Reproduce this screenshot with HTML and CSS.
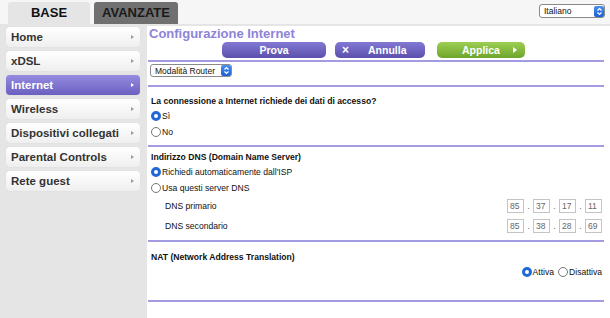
FILE: index.html
```html
<!DOCTYPE html>
<html lang="it">
<head>
  <meta charset="UTF-8">
  <title>Configurazione Internet</title>
  <link rel="stylesheet" href="styles.css">
</head>
<body>
  <div class="top">
    <div class="tabs">
      <div class="tab tab-base">BASE</div>
      <div class="tab tab-adv">AVANZATE</div>
    </div>
    <div class="select lang">
      <span class="select-text">Italiano</span>
      <span class="select-arrow">
        <svg width="7" height="9" viewBox="0 0 7 9"><path d="M1.5 3.5 L3.5 1.5 L5.5 3.5 M1.5 5.5 L3.5 7.5 L5.5 5.5" fill="none" stroke="#fff" stroke-width="1.2"/></svg>
      </span>
    </div>
  </div>

  <div class="layout">
    <nav class="sidebar">
      <div class="menu-item">Home<span class="arrow"></span></div>
      <div class="menu-item">xDSL<span class="arrow"></span></div>
      <div class="menu-item active">Internet<span class="arrow"></span></div>
      <div class="menu-item">Wireless<span class="arrow"></span></div>
      <div class="menu-item">Dispositivi collegati<span class="arrow"></span></div>
      <div class="menu-item">Parental Controls<span class="arrow"></span></div>
      <div class="menu-item">Rete guest<span class="arrow"></span></div>
    </nav>

    <main class="content">
      <h1 class="page-title">Configurazione Internet</h1>

      <div class="actions">
        <button class="btn btn-purple btn-prova">Prova</button>
        <button class="btn btn-purple btn-annulla"><span class="btn-x">×</span>Annulla</button>
        <button class="btn btn-green btn-applica">Applica<span class="btn-play"></span></button>
      </div>
      <div class="rule"></div>

      <div class="select mode">
        <span class="select-text">Modalità Router</span>
        <span class="select-arrow">
          <svg width="7" height="9" viewBox="0 0 7 9"><path d="M1.5 3.5 L3.5 1.5 L5.5 3.5 M1.5 5.5 L3.5 7.5 L5.5 5.5" fill="none" stroke="#fff" stroke-width="1.2"/></svg>
        </span>
      </div>
      <div class="rule rule-mode"></div>

      <section class="block block-login">
        <div class="block-title">La connessione a Internet richiede dei dati di accesso?</div>
        <div class="radio-row"><span class="radio on"></span>Sì</div>
        <div class="radio-row"><span class="radio"></span>No</div>
      </section>
      <div class="rule rule-login"></div>

      <section class="block block-dns">
        <div class="block-title">Indirizzo DNS (Domain Name Server)</div>
        <div class="radio-row"><span class="radio on"></span>Richiedi automaticamente dall'ISP</div>
        <div class="radio-row"><span class="radio"></span>Usa questi server DNS</div>
        <div class="ip-row">
          <span class="ip-label">DNS primario</span>
          <span class="ip">
            <span class="ip-box">85</span><span class="ip-dot">.</span><span class="ip-box">37</span><span class="ip-dot">.</span><span class="ip-box">17</span><span class="ip-dot">.</span><span class="ip-box">11</span>
          </span>
        </div>
        <div class="ip-row">
          <span class="ip-label">DNS secondario</span>
          <span class="ip">
            <span class="ip-box">85</span><span class="ip-dot">.</span><span class="ip-box">38</span><span class="ip-dot">.</span><span class="ip-box">28</span><span class="ip-dot">.</span><span class="ip-box">69</span>
          </span>
        </div>
      </section>
      <div class="rule rule-dns"></div>

      <section class="block block-nat">
        <div class="block-title">NAT (Network Address Translation)</div>
        <div class="radio-row nat-choice">
          <span class="radio on"></span>Attiva
          <span class="radio radio-gap"></span>Disattiva
        </div>
      </section>
      <div class="rule rule-nat"></div>
    </main>
  </div>
</body>
</html>
```

FILE: styles.css
```css
body { margin: 0; background: #e5e5e5; font-family: "Liberation Sans", Arial, sans-serif; color: #111; }

.top { height: 24px; background: #f6f6f6; display: flex; justify-content: space-between; }
.tabs { display: flex; align-items: flex-end; padding-left: 8px; gap: 4px; }
.tab { height: 22px; line-height: 22px; text-align: center; font-weight: bold; font-size: 13px; border-radius: 3px 3px 0 0; }
.tab-base { width: 82px; background: #e5e5e5; }
.tab-adv { width: 84px; background: #707070; color: #1a1a1a; }

.select { display: flex; align-items: center; justify-content: space-between; height: 13px; border: 1px solid #8a8a8a; border-radius: 3px; background: #fff; box-sizing: border-box; padding-left: 4px; font-size: 8.5px; }
.select-arrow { width: 10px; height: 11px; background: linear-gradient(#4a8ff0, #1d5fd0); border-radius: 2px; display: flex; align-items: center; justify-content: center; }
.lang { width: 66px; height: 14px; margin: 4px 5px 0 0; }

.layout { display: flex; min-height: 294px; }

.sidebar { width: 147px; box-sizing: border-box; padding: 3px 7px 0 6px; }
.menu-item { height: 20px; margin-bottom: 4px; border-radius: 4px; background: linear-gradient(#ffffff, #efefef); box-shadow: 0 0 1px rgba(0,0,0,0.15); display: flex; align-items: center; justify-content: space-between; padding: 0 5px; font-weight: bold; font-size: 11.5px; color: #333; }
.menu-item .arrow { width: 0; height: 0; border-left: 3px solid #999; border-top: 2.5px solid transparent; border-bottom: 2.5px solid transparent; margin-right: 1px; }
.menu-item.active { background: linear-gradient(#958be0, #6b60c0); color: #fff; }
.menu-item.active .arrow { border-left-color: #fff; }

.content { flex: 1; background: #fff; margin-top: 2px; padding: 0 6px 0 1px; }

.page-title { margin: 0 0 0 1px; height: 16px; line-height: 16px; font-size: 13px; font-weight: bold; color: #8d84d8; }

.actions { display: flex; height: 16px; padding-left: 74px; }
.btn { height: 16px; border: 0; border-radius: 5px; color: #fff; font-family: inherit; font-weight: bold; font-size: 10.5px; padding: 0; display: flex; align-items: center; justify-content: center; position: relative; }
.btn-purple { background: linear-gradient(#8378d2, #5b50ac); }
.btn-green { background: linear-gradient(#9ccf52, #6ea52c); }
.btn-prova { width: 104px; margin-right: 9px; }
.btn-annulla { width: 90px; margin-right: 12px; justify-content: flex-start; padding-left: 7px; }
.btn-x { font-size: 12px; margin-right: 19px; }
.btn-applica { width: 88px; }
.btn-play { position: absolute; right: 8px; top: 5px; width: 0; height: 0; border-left: 4px solid #fff; border-top: 3px solid transparent; border-bottom: 3px solid transparent; }

.rule { height: 2px; background: #a29be2; margin-top: 2px; }
.rule-mode { margin-top: 8px; }
.rule-login { margin-top: 5px; }
.rule-dns { margin-top: 4px; }
.rule-nat { margin-top: 20px; }

.mode { width: 82px; margin: 2px 0 0 2px; }

.block { font-size: 8.6px; padding-left: 3px; }
.block-title { font-weight: bold; height: 14px; line-height: 14px; }
.block-login { margin-top: 7px; }
.block-dns { margin-top: 4px; }
.block-dns .block-title { height: 13px; line-height: 13px; }
.block-nat { margin-top: 8px; }

.radio-row { height: 16px; display: flex; align-items: center; }
.radio { width: 10px; height: 10px; box-sizing: border-box; border-radius: 50%; border: 1px solid #777; background: #fff; margin-right: 1px; }
.radio.on { border: 3px solid #1f6ad6; background: #fff; }
.radio-gap { margin-left: 4px; }
.nat-choice { justify-content: flex-end; padding-right: 2px; }

.ip-row { height: 20px; display: flex; align-items: center; justify-content: space-between; padding-left: 14px; padding-right: 2px; }
.ip { display: flex; align-items: center; }
.ip-box { width: 17px; height: 14px; box-sizing: border-box; border: 1px solid #c4c4c4; color: #666; font-size: 8.5px; line-height: 12px; padding-left: 2px; }
.ip-dot { width: 9px; text-align: center; color: #666; }
```
